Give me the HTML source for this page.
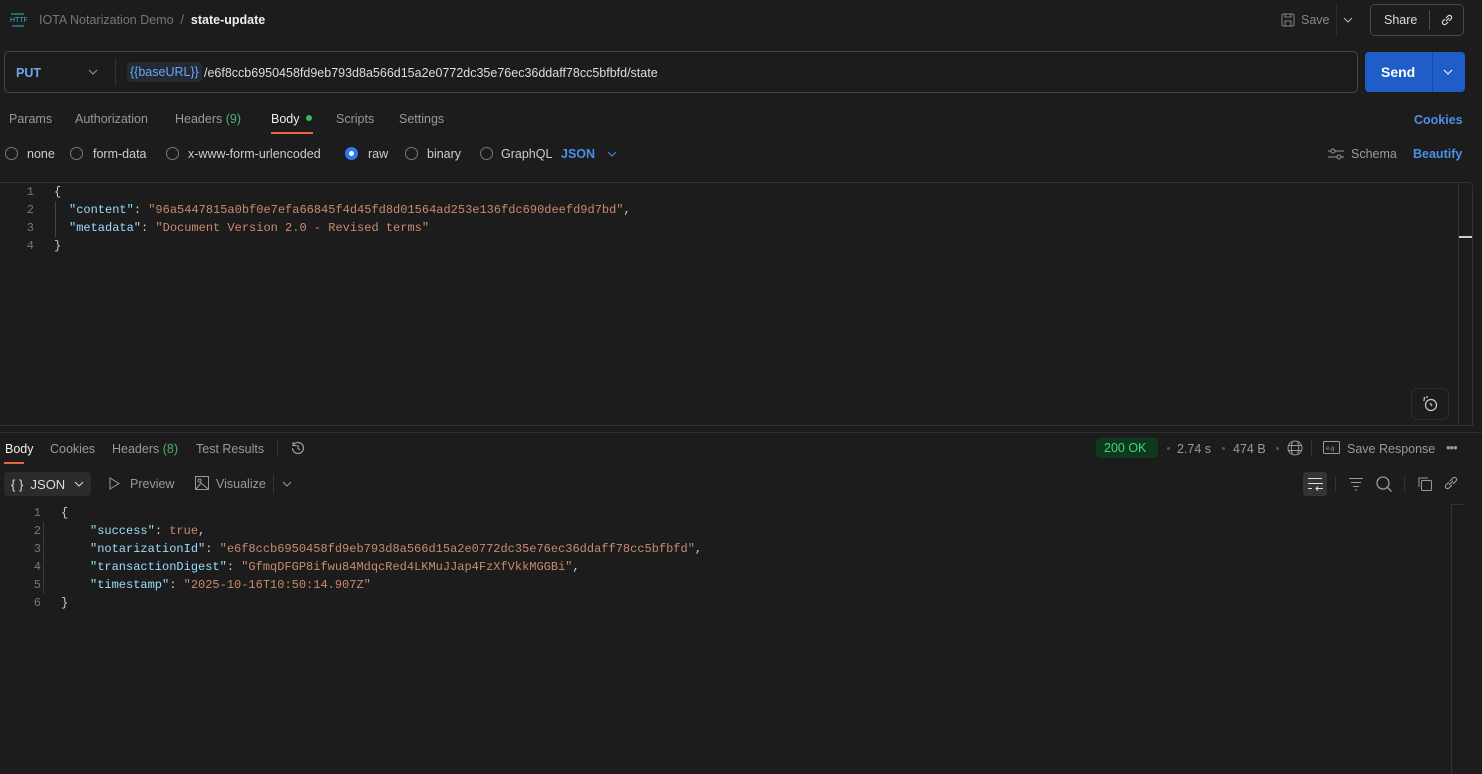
<!DOCTYPE html>
<html><head><meta charset="utf-8"><style>
*{box-sizing:border-box;margin:0;padding:0}
body{width:1482px;height:773px;background:#1c1c1c;font-family:"Liberation Sans",sans-serif;color:#a8a8a8;position:relative;overflow:hidden;font-size:12px}
.a{position:absolute;white-space:nowrap}
.mono{font-family:"Liberation Mono",monospace;font-size:12px}
.k{color:#9cdcfe}.s{color:#c98a6e}.p{color:#ccc}.n{color:#777}
.radio{position:absolute;width:13px;height:13px;border:1px solid #777;border-radius:50%;top:147px}
</style></head><body>
<!-- top bar -->
<svg class="a" style="left:9px;top:11px" width="18" height="18" viewBox="0 0 18 18"><text x="1" y="11" font-size="7" fill="#3ab0c0" font-family="Liberation Sans">HTTP</text><path d="M2 3h13M3 15h12" stroke="#3ab0c0" stroke-width="1"/></svg>
<div class="a" style="left:39px;top:13px;font-size:12.5px;color:#777">IOTA Notarization Demo&nbsp;&nbsp;/&nbsp;&nbsp;<span style="color:#eee;font-weight:bold">state-update</span></div>
<svg class="a" style="left:1281px;top:13px" width="14" height="14" viewBox="0 0 14 14" fill="none" stroke="#888"><rect x="1" y="1" width="12" height="12" rx="1.5"/><path d="M4 1v3h6V1M4 13V8h6v5"/></svg>
<div class="a" style="left:1301px;top:13px;font-size:12.5px;color:#888">Save</div>
<div class="a" style="left:1336px;top:4px;width:1px;height:32px;background:#2b2b2b"></div>
<svg class="a" style="left:1343px;top:16px" width="10" height="8"><path d="M1 2l4 4 4-4" stroke="#bbb" fill="none"/></svg>
<div class="a" style="left:1370px;top:4px;width:94px;height:32px;border:1px solid #4a4a4a;border-radius:5px"></div>
<div class="a" style="left:1384px;top:13px;font-size:12.5px;color:#ddd">Share</div>
<div class="a" style="left:1429px;top:10px;width:1px;height:20px;background:#4a4a4a"></div>
<svg class="a" style="left:1439px;top:12px" width="16" height="16" viewBox="0 0 16 16" fill="none" stroke="#ddd" stroke-width="1.2"><path d="M7 9l3-3M6 7L4 9a2.1 2.1 0 003 3l2-2M10 9l2-2a2.1 2.1 0 00-3-3L7 6"/></svg>
<!-- url -->
<div class="a" style="left:4px;top:51px;width:1354px;height:42px;border:1px solid #474747;border-radius:5px"></div>
<div class="a" style="left:16px;top:66px;font-size:12.5px;color:#6aa8f0;font-weight:bold">PUT</div>
<svg class="a" style="left:88px;top:69px" width="10" height="7"><path d="M1 1l4 4 4-4" stroke="#999" fill="none"/></svg>
<div class="a" style="left:115px;top:59px;width:1px;height:26px;background:#333"></div>
<div class="a" style="left:127px;top:62px;height:20px;padding:3px 3px;background:#232a33;border-radius:3px;color:#6aa8f0;font-size:12.5px">{{baseURL}}</div>
<div class="a" style="left:204px;top:66px;font-size:12.5px;color:#ddd">/e6f8ccb6950458fd9eb793d8a566d15a2e0772dc35e76ec36ddaff78cc5bfbfd/state</div>
<div class="a" style="left:1365px;top:52px;width:100px;height:40px;background:#1f5dc9;border-radius:4px"></div>
<div class="a" style="left:1432px;top:52px;width:1px;height:40px;background:#184a9e"></div>
<div class="a" style="left:1381px;top:64px;font-size:14px;color:#fff;font-weight:bold">Send</div>
<svg class="a" style="left:1443px;top:69px" width="10" height="7"><path d="M1 1l4 4 4-4" stroke="#fff" fill="none"/></svg>
<!-- tabs -->
<div class="a" style="left:9px;top:112px;font-size:12.5px;color:#999">Params</div>
<div class="a" style="left:75px;top:112px;font-size:12.5px;color:#999">Authorization</div>
<div class="a" style="left:175px;top:112px;font-size:12.5px;color:#999">Headers <span style="color:#4caf70">(9)</span></div>
<div class="a" style="left:271px;top:112px;font-size:12.5px;color:#eee">Body</div>
<div class="a" style="left:306px;top:115px;width:6px;height:6px;border-radius:50%;background:#2fbf55"></div>
<div class="a" style="left:271px;top:132px;width:42px;height:2px;background:#e5673f"></div>
<div class="a" style="left:336px;top:112px;font-size:12.5px;color:#999">Scripts</div>
<div class="a" style="left:399px;top:112px;font-size:12.5px;color:#999">Settings</div>
<div class="a" style="left:1414px;top:113px;font-size:12.5px;color:#4a8fe8;font-weight:bold">Cookies</div>
<!-- radios -->
<div class="radio" style="left:5px"></div><div class="a" style="left:27px;top:147px;font-size:12.5px;color:#ccc">none</div>
<div class="radio" style="left:70px"></div><div class="a" style="left:93px;top:147px;font-size:12.5px;color:#ccc">form-data</div>
<div class="radio" style="left:166px"></div><div class="a" style="left:188px;top:147px;font-size:12.5px;color:#ccc">x-www-form-urlencoded</div>
<div class="radio" style="left:345px;border:4px solid #2c78f0;background:#fff"></div><div class="a" style="left:368px;top:147px;font-size:12.5px;color:#ccc">raw</div>
<div class="radio" style="left:405px"></div><div class="a" style="left:427px;top:147px;font-size:12.5px;color:#ccc">binary</div>
<div class="radio" style="left:480px"></div><div class="a" style="left:501px;top:147px;font-size:12.5px;color:#ccc">GraphQL</div>
<div class="a" style="left:561px;top:147px;font-size:12.5px;color:#4a8fe8;font-weight:bold">JSON</div>
<svg class="a" style="left:607px;top:151px" width="10" height="7"><path d="M1 1l4 4 4-4" stroke="#4a8fe8" fill="none"/></svg>
<svg class="a" style="left:1328px;top:147px" width="16" height="14" fill="none" stroke="#999"><path d="M0 4h16M0 10h16"/><circle cx="5" cy="4" r="2" fill="#1c1c1c"/><circle cx="11" cy="10" r="2" fill="#1c1c1c"/></svg>
<div class="a" style="left:1351px;top:147px;font-size:12.5px;color:#999">Schema</div>
<div class="a" style="left:1413px;top:147px;font-size:12.5px;color:#4a8fe8;font-weight:bold">Beautify</div>
<!-- editor -->
<div class="a" style="left:0;top:182px;width:1473px;height:244px;border-top:1px solid #333;border-right:1px solid #333;border-bottom:1px solid #333;border-radius:0 5px 0 0"></div>
<div class="a" style="left:1458px;top:182px;width:1px;height:244px;background:#333"></div>
<div class="a" style="left:1459px;top:236px;width:13px;height:2px;background:#ccc"></div>
<div class="a" style="left:55px;top:201px;width:1px;height:36px;background:#444"></div>
<div class="a mono" style="left:0;top:183px;line-height:18px">
<div><span class="n" style="display:inline-block;width:34px;text-align:right">1</span><span class="p" style="margin-left:20px">{</span></div>
<div><span class="n" style="display:inline-block;width:34px;text-align:right">2</span><span style="margin-left:35px"><span class="k">"content"</span><span class="p">: </span><span class="s">"96a5447815a0bf0e7efa66845f4d45fd8d01564ad253e136fdc690deefd9d7bd"</span><span class="p">,</span></span></div>
<div><span class="n" style="display:inline-block;width:34px;text-align:right">3</span><span style="margin-left:35px"><span class="k">"metadata"</span><span class="p">: </span><span class="s">"Document Version 2.0 - Revised terms"</span></span></div>
<div><span class="n" style="display:inline-block;width:34px;text-align:right">4</span><span class="p" style="margin-left:20px">}</span></div>
</div>
<div class="a" style="left:1411px;top:388px;width:38px;height:32px;border:1px solid #2c2c2c;border-radius:6px"></div>
<svg class="a" style="left:1421px;top:395px" width="18" height="18" viewBox="0 0 18 18" fill="none" stroke="#ccc" stroke-width="1.2"><circle cx="10" cy="10" r="5.5"/><path d="M3 2l1 2M2 5h2M6 1v2M9 8l2 3"/></svg>
<div class="a" style="left:0;top:432px;width:1482px;height:1px;background:#2e2e2e"></div>
<!-- response tabs -->
<div class="a" style="left:5px;top:442px;font-size:12.5px;color:#eee">Body</div>
<div class="a" style="left:4px;top:462px;width:20px;height:2px;background:#e5673f"></div>
<div class="a" style="left:50px;top:442px;font-size:12.5px;color:#999">Cookies</div>
<div class="a" style="left:112px;top:442px;font-size:12.5px;color:#999">Headers <span style="color:#4caf70">(8)</span></div>
<div class="a" style="left:196px;top:442px;font-size:12.5px;color:#999">Test Results</div>
<div class="a" style="left:277px;top:440px;width:1px;height:16px;background:#333"></div>
<svg class="a" style="left:290px;top:440px" width="16" height="16" viewBox="0 0 16 16" fill="none" stroke="#999" stroke-width="1.2"><path d="M2.5 8a5.5 5.5 0 105.5-5.5A5.5 5.5 0 003 5.5M3 2v3.5h3.5M8 5v3.5l2 1.5"/></svg>
<div class="a" style="left:1096px;top:438px;width:62px;height:20px;background:#0d3a1f;border-radius:4px;color:#4ccf7a;font-size:12.5px;padding:3px 8px">200 OK</div>
<div class="a" style="left:1167px;top:447px;width:3px;height:3px;border-radius:50%;background:#555"></div>
<div class="a" style="left:1177px;top:442px;font-size:12.5px;color:#999">2.74 s</div>
<div class="a" style="left:1222px;top:447px;width:3px;height:3px;border-radius:50%;background:#555"></div>
<div class="a" style="left:1233px;top:442px;font-size:12.5px;color:#999">474 B</div>
<div class="a" style="left:1276px;top:447px;width:3px;height:3px;border-radius:50%;background:#555"></div>
<svg class="a" style="left:1287px;top:440px" width="16" height="16" viewBox="0 0 16 16" fill="none" stroke="#999"><circle cx="8" cy="8" r="7"/><path d="M1 5.5h14M1 10.5h14M5.5 1.5c-1.5 4-1.5 9 0 13M10.5 1.5c1.5 4 1.5 9 0 13"/></svg>
<div class="a" style="left:1311px;top:440px;width:1px;height:16px;background:#333"></div>
<svg class="a" style="left:1323px;top:441px" width="17" height="13" fill="none" stroke="#999"><rect x="0.5" y="0.5" width="16" height="12" rx="1"/><text x="3" y="9" font-size="6" fill="#999" stroke="none">e.g</text></svg>
<div class="a" style="left:1347px;top:442px;font-size:12.5px;color:#999">Save Response</div>
<div class="a" style="left:1446px;top:440px;font-size:13px;color:#999;letter-spacing:-1px">•••</div>
<!-- response toolbar -->
<div class="a" style="left:4px;top:472px;width:87px;height:24px;background:#2b2b2b;border-radius:4px"></div>
<div class="a" style="left:11px;top:477px;font-size:13px;color:#ddd">{ }&nbsp; JSON</div>
<svg class="a" style="left:74px;top:481px" width="10" height="7"><path d="M1 1l4 4 4-4" stroke="#ddd" fill="none"/></svg>
<svg class="a" style="left:108px;top:477px" width="12" height="13" fill="none" stroke="#999"><path d="M2 1l9 5.5L2 12z"/></svg>
<div class="a" style="left:130px;top:477px;font-size:12.5px;color:#999">Preview</div>
<svg class="a" style="left:195px;top:476px" width="14" height="14" fill="none" stroke="#999"><rect x="0.5" y="0.5" width="13" height="13"/><circle cx="4.5" cy="4.5" r="1.5"/><path d="M1 13l5-6 7 6"/></svg>
<div class="a" style="left:216px;top:477px;font-size:12.5px;color:#999">Visualize</div>
<div class="a" style="left:273px;top:474px;width:1px;height:20px;background:#333"></div>
<svg class="a" style="left:282px;top:481px" width="10" height="7"><path d="M1 1l4 4 4-4" stroke="#999" fill="none"/></svg>
<div class="a" style="left:1303px;top:472px;width:24px;height:24px;background:#333;border-radius:3px"></div>
<svg class="a" style="left:1307px;top:477px" width="16" height="14" fill="none" stroke="#ddd"><path d="M1 1.5h14M1 6.5h14a2.5 2.5 0 010 5H9M1 11.5h4M11 9.5l-2 2 2 2"/></svg>
<div class="a" style="left:1335px;top:476px;width:1px;height:16px;background:#333"></div>
<svg class="a" style="left:1348px;top:477px" width="16" height="14" fill="none" stroke="#999"><path d="M1 1.5h14M3 5.5h10M5 9.5h6M7 13h2"/></svg>
<svg class="a" style="left:1376px;top:476px" width="16" height="16" fill="none" stroke="#999" stroke-width="1.3"><circle cx="7" cy="7" r="6"/><path d="M11.5 11.5l4 4"/></svg>
<div class="a" style="left:1404px;top:476px;width:1px;height:16px;background:#333"></div>
<svg class="a" style="left:1417px;top:476px" width="16" height="16" fill="none" stroke="#999"><rect x="4.5" y="4.5" width="10" height="10" rx="1"/><path d="M2 11V2h9"/></svg>
<svg class="a" style="left:1443px;top:475px" width="16" height="16" viewBox="0 0 16 16" fill="none" stroke="#999" stroke-width="1.2"><path d="M6 10l4-4M6 7L3 10a2.1 2.1 0 003 3l3-3M10 9l3-3a2.1 2.1 0 00-3-3L7 6"/></svg>
<div class="a" style="left:1451px;top:504px;width:1px;height:270px;background:#333"></div>
<div class="a" style="left:1451px;top:504px;width:12px;height:1px;background:#333"></div>
<!-- response code -->
<div class="a" style="left:43px;top:522px;width:1px;height:72px;background:#3a3a3a"></div>
<div class="a mono" style="left:0;top:504px;line-height:18px">
<div><span class="n" style="display:inline-block;width:41px;text-align:right">1</span><span class="p" style="margin-left:20px">{</span></div>
<div><span class="n" style="display:inline-block;width:41px;text-align:right">2</span><span style="margin-left:49px"><span class="k">"success"</span><span class="p">: </span><span class="s">true</span><span class="p">,</span></span></div>
<div><span class="n" style="display:inline-block;width:41px;text-align:right">3</span><span style="margin-left:49px"><span class="k">"notarizationId"</span><span class="p">: </span><span class="s">"e6f8ccb6950458fd9eb793d8a566d15a2e0772dc35e76ec36ddaff78cc5bfbfd"</span><span class="p">,</span></span></div>
<div><span class="n" style="display:inline-block;width:41px;text-align:right">4</span><span style="margin-left:49px"><span class="k">"transactionDigest"</span><span class="p">: </span><span class="s">"GfmqDFGP8ifwu84MdqcRed4LKMuJJap4FzXfVkkMGGBi"</span><span class="p">,</span></span></div>
<div><span class="n" style="display:inline-block;width:41px;text-align:right">5</span><span style="margin-left:49px"><span class="k">"timestamp"</span><span class="p">: </span><span class="s">"2025-10-16T10:50:14.907Z"</span></span></div>
<div><span class="n" style="display:inline-block;width:41px;text-align:right">6</span><span class="p" style="margin-left:20px">}</span></div>
</div>
</body></html>
